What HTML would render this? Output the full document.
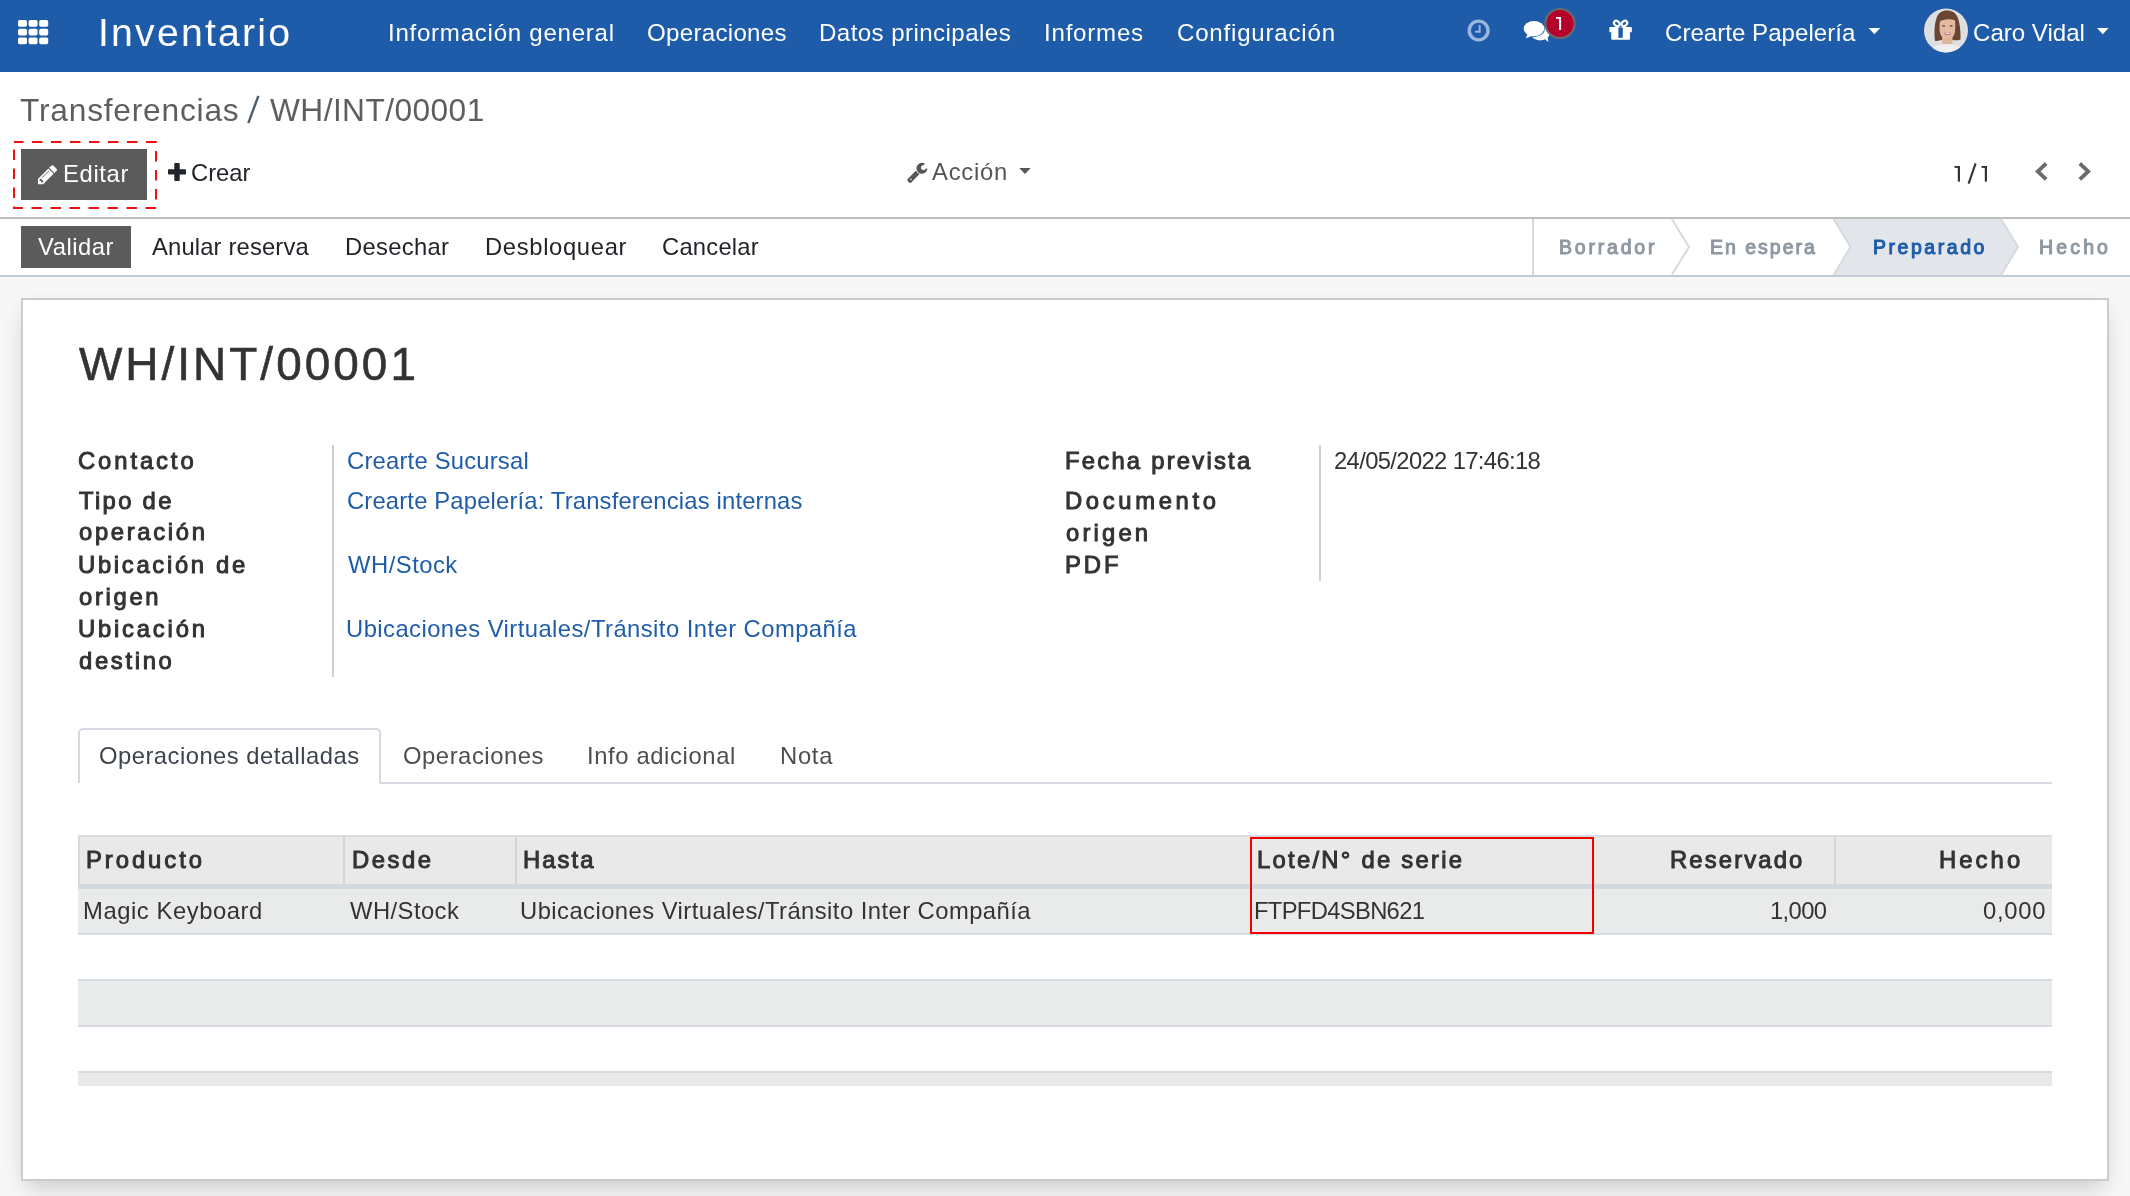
<!DOCTYPE html>
<html><head><meta charset="utf-8">
<style>
html,body{margin:0;padding:0;width:2130px;height:1196px;overflow:hidden;background:#f7f7f7;font-family:"Liberation Sans",sans-serif;}
.a{position:absolute;}
.t{position:absolute;white-space:nowrap;font-family:"Liberation Sans",sans-serif;will-change:transform;}
svg{position:absolute;overflow:visible;}
</style></head><body>
<!-- NAVBAR -->
<div class="a" style="left:0;top:0;width:2130px;height:72px;background:#1E5CAA"></div>
<svg style="left:0;top:0" width="60" height="72">
 <g fill="#fff"><rect x="18" y="20" width="9" height="6.8" rx="1.7"/><rect x="28.6" y="20" width="9" height="6.8" rx="1.7"/><rect x="39.2" y="20" width="9" height="6.8" rx="1.7"/><rect x="18" y="28.7" width="9" height="6.8" rx="1.7"/><rect x="28.6" y="28.7" width="9" height="6.8" rx="1.7"/><rect x="39.2" y="28.7" width="9" height="6.8" rx="1.7"/><rect x="18" y="37.4" width="9" height="6.8" rx="1.7"/><rect x="28.6" y="37.4" width="9" height="6.8" rx="1.7"/><rect x="39.2" y="37.4" width="9" height="6.8" rx="1.7"/></g>
</svg>
<!-- clock -->
<svg style="left:0;top:0" width="2130" height="72">
 <circle cx="1478.6" cy="30.5" r="9.4" fill="none" stroke="#9bb6dc" stroke-width="3.4"/>
 <rect x="1478.7" y="25" width="1.9" height="7.6" fill="#9bb6dc"/>
 <rect x="1475" y="30.7" width="5.6" height="1.9" fill="#9bb6dc"/>
 <!-- chat bubbles -->
 <g fill="#fff">
  <ellipse cx="1540.2" cy="33.2" rx="9.6" ry="7.2"/>
  <path d="M1548.3,41.9 L1544.2,38.6 L1547.6,36.2 Z"/>
 </g>
 <ellipse cx="1534" cy="28.6" rx="11" ry="8.3" fill="#1E5CAA"/>
 <g fill="#fff">
  <ellipse cx="1534" cy="28.6" rx="10.3" ry="7.6"/>
  <path d="M1525.8,38.2 L1527.8,33.6 L1532.6,35.8 Z"/>
 </g>
 <!-- badge -->
 <circle cx="1560" cy="23.5" r="14.6" fill="#b5002c" stroke="#6b6b6b" stroke-width="2"/>
 <!-- gift -->
 <g fill="#fff">
  <rect x="1609.4" y="27" width="22.4" height="5.3" rx="0.6"/>
  <rect x="1611.2" y="32" width="18.8" height="7.8" rx="1"/>
  <ellipse cx="1616.8" cy="23.5" rx="3.1" ry="2.3" transform="rotate(38 1616.8 23.5)" fill="none" stroke="#fff" stroke-width="2.1"/>
  <ellipse cx="1624.4" cy="23.5" rx="3.1" ry="2.3" transform="rotate(-38 1624.4 23.5)" fill="none" stroke="#fff" stroke-width="2.1"/>
 </g>
 <rect x="1618.4" y="27.4" width="4.4" height="10.4" fill="#1E5CAA"/>
 <!-- carets -->
 <path d="M1868.6,28 L1880.2,28 L1874.4,34.2 Z" fill="#fff"/>
 <path d="M2097,28 L2108.6,28 L2102.8,34.2 Z" fill="#fff"/>
 <!-- avatar -->
 <defs><clipPath id="av"><circle cx="1946" cy="30.5" r="22"/></clipPath>
 <filter id="bl" x="-10%" y="-10%" width="120%" height="120%"><feGaussianBlur stdDeviation="0.6"/></filter></defs>
 <g clip-path="url(#av)">
  <rect x="1920" y="5" width="52" height="52" fill="#dddfe2"/>
  <g filter="url(#bl)">
  <path d="M1935,41 C1934,33 1934.5,24 1936.5,18 C1938.5,12.5 1942.5,10.5 1947,10.6 C1952,10.6 1956,13 1958,18 C1960,24 1960.8,33 1960.5,39.5 C1958,40.5 1955,40.5 1953,40 L1941,40 C1939,40.8 1937,41.2 1935,41 Z" fill="#6a4532"/>
  <path d="M1939.6,22 C1939.6,18.5 1942.5,16.6 1947.4,16.6 C1952.4,16.6 1955.2,18.5 1955.2,22 L1955.2,29 C1955.2,35.5 1951.8,39.4 1947.4,39.4 C1943,39.4 1939.6,35.5 1939.6,29 Z" fill="#e4b9a3"/>
  <path d="M1938,26 C1938.5,19 1941,15.5 1947,15.2 C1952,15 1955.5,17.5 1956.2,21 C1952,18.6 1946,18.6 1940.5,21 Z" fill="#6a4532"/>
  <ellipse cx="1943.6" cy="25.9" rx="1.6" ry="0.9" fill="#7d5a50"/>
  <ellipse cx="1951.2" cy="25.9" rx="1.6" ry="0.9" fill="#7d5a50"/>
  <ellipse cx="1947.4" cy="33.6" rx="3.3" ry="1.7" fill="#c77f86"/>
  <ellipse cx="1947.4" cy="33.3" rx="2.2" ry="0.8" fill="#f4eeee"/>
  <rect x="1942" y="37.5" width="10.5" height="7" fill="#ddb59f"/>
  <path d="M1926,57 C1929,48 1936,44 1947,44 C1958,44 1965,48 1968,57 Z" fill="#eeeef0"/>
  </g>
 </g>
</svg>
<svg style="left:0;top:0" width="1600" height="60"><rect x="1559.1" y="17" width="2" height="13" fill="#fff"/><rect x="1556" y="17" width="4" height="1.8" fill="#fff"/></svg>

<!-- CONTROL PANEL -->
<div class="a" style="left:0;top:72px;width:2130px;height:205px;background:#fff"></div>
<div class="a" style="left:21px;top:149px;width:126px;height:51px;background:#5b5b5b"></div>
<svg style="left:0;top:0" width="2130" height="300">
 <rect x="14" y="142" width="142" height="66" fill="none" stroke="#ee1111" stroke-width="2" stroke-dasharray="10.5 8.5" stroke-dashoffset="1"/>
 <line x1="248.3" y1="123.2" x2="258.4" y2="95.8" stroke="#4f5b69" stroke-width="2.4"/>
 <!-- pencil -->
 <g transform="translate(38,165) scale(0.0125)" fill="#fff">
  <path d="M363 1408l91-91-235-235-91 91v107h128v128h107zm523-928q0-22-22-22-10 0-17 7l-542 542q-7 7-7 17 0 22 22 22 10 0 17-7l542-542q7-7 7-17zm-54-192l416 416-832 832h-416v-416zm683 96q0 53-37 90l-166 166-416-416 166-165q36-38 90-38 53 0 91 38l235 234q37 39 37 91z"/>
 </g>
 <!-- plus -->
 <rect x="168" y="169.2" width="18" height="5.4" rx="0.8" fill="#212529"/>
 <rect x="174.3" y="163" width="5.4" height="18" rx="0.8" fill="#212529"/>
 <!-- wrench -->
 <g transform="translate(907,161.2) scale(0.01225)" fill="#555">
  <path d="M384 1472q0-26-19-45t-45-19-45 19-19 45 19 45 45 19 45-19 19-45zm644-420l-682 682q-37 37-90 37-52 0-91-37l-106-108q-38-36-38-90 0-53 38-91l681-681q39 98 114.5 173.5t173.5 114.5zm634-435q0 39-23 106-47 134-164.5 217.5t-258.5 83.5q-185 0-316.5-131.5t-131.5-316.5 131.5-316.5 316.5-131.5q58 0 121.5 16.5t107.5 46.5q16 11 16 28t-16 28l-293 169v224l193 107q5-3 79-48.5t135.5-81 70.5-35.5q15 0 23.5 10t8.5 25z"/>
 </g>
 <path d="M1019.2,168 L1030.7,168 L1025,174 Z" fill="#555"/>
 <!-- pager 1/1 -->
 <g fill="#333">
  <rect x="1957.8" y="166" width="2.2" height="15.6"/><rect x="1954.5" y="166" width="4" height="1.9"/>
  <rect x="1984.8" y="166" width="2.2" height="15.6"/><rect x="1981.5" y="166" width="4" height="1.9"/>
 </g>
 <line x1="1968.6" y1="183.6" x2="1975.6" y2="163.4" stroke="#333" stroke-width="2.1"/>
 <!-- chevrons -->
 <polyline points="2046.2,163.5 2037.8,171.4 2046.2,179.3" fill="none" stroke="#6c6c6c" stroke-width="3.8"/>
 <polyline points="2079.8,163.5 2088.2,171.4 2079.8,179.3" fill="none" stroke="#6c6c6c" stroke-width="3.8"/>
 <!-- lines -->
 <rect x="0" y="217" width="2130" height="2" fill="#bdbdbd"/>
 <rect x="0" y="275" width="2130" height="2" fill="#c2cad3"/>
 <rect x="1532" y="219" width="2" height="56" fill="#d3d9df"/>
 <!-- status bar -->
 <polygon points="1833.6,219 2001,219 2018,247 2001,275 1833.6,275 1850.5,247" fill="#e2e6ea"/>
 <polyline points="1671.8,219 1689,247 1671.8,275" fill="none" stroke="#d5dae0" stroke-width="2"/>
 <polyline points="1833.6,219 1850.5,247 1833.6,275" fill="none" stroke="#d5dae0" stroke-width="2"/>
 <polyline points="2001,219 2018,247 2001,275" fill="none" stroke="#d5dae0" stroke-width="2"/>
</svg>
<div class="a" style="left:21px;top:226px;width:110px;height:42px;background:#5b5b5b"></div>

<!-- SHEET -->
<div class="a" style="left:21px;top:298px;width:2084px;height:879px;background:#fff;border:2px solid #cdcbcb;box-shadow:0 10px 22px -5px rgba(0,0,0,0.2)"></div>
<div class="a" style="left:332px;top:445px;width:2px;height:232px;background:#cfcfcf"></div>
<div class="a" style="left:1319px;top:445px;width:2px;height:136px;background:#cfcfcf"></div>

<!-- tabs -->
<div class="a" style="left:380px;top:782px;width:1672px;height:2px;background:#d5dae0"></div>
<div class="a" style="left:78px;top:728px;width:299px;height:53px;border:2px solid #d5dae0;border-bottom:none;border-radius:5px 5px 0 0;background:#fff"></div>

<!-- table -->
<div class="a" style="left:78px;top:835px;width:1974px;height:2px;background:#d9dde2"></div>
<div class="a" style="left:78px;top:837px;width:1974px;height:47px;background:#e9e9e9"></div>
<div class="a" style="left:78px;top:837px;width:2px;height:47px;background:#d9d9d9"></div>
<div class="a" style="left:343px;top:837px;width:2px;height:47px;background:#d4d4d4"></div>
<div class="a" style="left:515px;top:837px;width:2px;height:47px;background:#d4d4d4"></div>
<div class="a" style="left:1834px;top:837px;width:2px;height:47px;background:#d4d4d4"></div>
<div class="a" style="left:78px;top:884px;width:1974px;height:5px;background:#d3d9de"></div>
<div class="a" style="left:78px;top:889px;width:1974px;height:44px;background:#e9ebeb"></div>
<div class="a" style="left:78px;top:933px;width:1974px;height:2px;background:#d5dbe0"></div>
<div class="a" style="left:78px;top:979px;width:1974px;height:2px;background:#d5dbe0"></div>
<div class="a" style="left:78px;top:981px;width:1974px;height:44px;background:#e9ebeb"></div>
<div class="a" style="left:78px;top:1025px;width:1974px;height:2px;background:#d5dbe0"></div>
<div class="a" style="left:78px;top:1071px;width:1974px;height:2px;background:#d5dbe0"></div>
<div class="a" style="left:78px;top:1073px;width:1974px;height:13px;background:#e9e9e9"></div>
<div class="a" style="left:1250px;top:837px;width:340px;height:93px;border:2px solid #f20000"></div>

<div class="t" style="left:98.0px;top:12.8px;font-size:39.2px;line-height:39.2px;letter-spacing:2.22px;color:#ffffff">Inventario</div>
<div class="t" style="left:387.5px;top:20.5px;font-size:24.1px;line-height:24.1px;letter-spacing:0.73px;color:#ffffff">Información general</div>
<div class="t" style="left:646.7px;top:20.5px;font-size:24.1px;line-height:24.1px;letter-spacing:0.29px;color:#ffffff">Operaciones</div>
<div class="t" style="left:819.4px;top:20.5px;font-size:24.1px;line-height:24.1px;letter-spacing:0.43px;color:#ffffff">Datos principales</div>
<div class="t" style="left:1044.3px;top:20.5px;font-size:24.1px;line-height:24.1px;letter-spacing:0.77px;color:#ffffff">Informes</div>
<div class="t" style="left:1177.2px;top:20.5px;font-size:24.1px;line-height:24.1px;letter-spacing:0.78px;color:#ffffff">Configuración</div>
<div class="t" style="left:1664.8px;top:20.6px;font-size:24.1px;line-height:24.1px;letter-spacing:0.01px;color:#ffffff">Crearte Papelería</div>
<div class="t" style="left:1973.0px;top:20.6px;font-size:24.1px;line-height:24.1px;letter-spacing:-0.02px;color:#ffffff">Caro Vidal</div>
<div class="t" style="left:20.0px;top:95.1px;font-size:31.7px;line-height:31.7px;letter-spacing:0.79px;color:#5e5e5e">Transferencias</div>
<div class="t" style="left:270.0px;top:95.1px;font-size:31.7px;line-height:31.7px;letter-spacing:0.43px;color:#5e5e5e">WH/INT/00001</div>
<div class="t" style="left:63.0px;top:161.7px;font-size:23.8px;line-height:23.8px;letter-spacing:0.64px;color:#ffffff">Editar</div>
<div class="t" style="left:191.0px;top:160.5px;font-size:23.8px;line-height:23.8px;letter-spacing:0.00px;color:#212529">Crear</div>
<div class="t" style="left:932.2px;top:160.0px;font-size:23.8px;line-height:23.8px;letter-spacing:0.76px;color:#555555">Acción</div>
<div class="t" style="left:38.0px;top:235.1px;font-size:23.8px;line-height:23.8px;letter-spacing:0.53px;color:#ffffff">Validar</div>
<div class="t" style="left:152.0px;top:235.1px;font-size:23.8px;line-height:23.8px;letter-spacing:0.15px;color:#212529">Anular reserva</div>
<div class="t" style="left:345.3px;top:235.1px;font-size:23.8px;line-height:23.8px;letter-spacing:0.30px;color:#212529">Desechar</div>
<div class="t" style="left:485.4px;top:235.1px;font-size:23.8px;line-height:23.8px;letter-spacing:0.65px;color:#212529">Desbloquear</div>
<div class="t" style="left:662.4px;top:235.1px;font-size:23.8px;line-height:23.8px;letter-spacing:0.21px;color:#212529">Cancelar</div>
<div class="t" style="left:1559.0px;top:238.4px;font-size:19.5px;line-height:19.5px;letter-spacing:2.80px;-webkit-text-stroke:1.0px #8e98a3;color:#8e98a3">Borrador</div>
<div class="t" style="left:1710.0px;top:238.4px;font-size:19.5px;line-height:19.5px;letter-spacing:2.00px;-webkit-text-stroke:1.0px #8e98a3;color:#8e98a3">En espera</div>
<div class="t" style="left:1872.7px;top:238.4px;font-size:19.5px;line-height:19.5px;letter-spacing:2.54px;-webkit-text-stroke:1.0px #1E5CAA;color:#1E5CAA">Preparado</div>
<div class="t" style="left:2039.0px;top:238.4px;font-size:19.5px;line-height:19.5px;letter-spacing:3.15px;-webkit-text-stroke:1.0px #8e98a3;color:#8e98a3">Hecho</div>
<div class="t" style="left:78.7px;top:342.0px;font-size:45.9px;line-height:45.9px;letter-spacing:3.04px;-webkit-text-stroke:0.6px #333333;color:#333333">WH/INT/00001</div>
<div class="t" style="left:77.5px;top:449.1px;font-size:23.8px;line-height:23.8px;letter-spacing:2.91px;-webkit-text-stroke:1.0px #333333;color:#333333">Contacto</div>
<div class="t" style="left:78.5px;top:488.8px;font-size:23.8px;line-height:23.8px;letter-spacing:2.32px;-webkit-text-stroke:1.0px #333333;color:#333333">Tipo de</div>
<div class="t" style="left:78.5px;top:520.3px;font-size:23.8px;line-height:23.8px;letter-spacing:2.68px;-webkit-text-stroke:1.0px #333333;color:#333333">operación</div>
<div class="t" style="left:77.5px;top:552.8px;font-size:23.8px;line-height:23.8px;letter-spacing:2.70px;-webkit-text-stroke:1.0px #333333;color:#333333">Ubicación de</div>
<div class="t" style="left:78.5px;top:584.6px;font-size:23.8px;line-height:23.8px;letter-spacing:2.68px;-webkit-text-stroke:1.0px #333333;color:#333333">origen</div>
<div class="t" style="left:77.5px;top:616.7px;font-size:23.8px;line-height:23.8px;letter-spacing:2.80px;-webkit-text-stroke:1.0px #333333;color:#333333">Ubicación</div>
<div class="t" style="left:78.5px;top:648.8px;font-size:23.8px;line-height:23.8px;letter-spacing:2.68px;-webkit-text-stroke:1.0px #333333;color:#333333">destino</div>
<div class="t" style="left:1064.6px;top:449.2px;font-size:23.8px;line-height:23.8px;letter-spacing:2.24px;-webkit-text-stroke:1.0px #333333;color:#333333">Fecha prevista</div>
<div class="t" style="left:1064.6px;top:489.0px;font-size:23.8px;line-height:23.8px;letter-spacing:3.65px;-webkit-text-stroke:1.0px #333333;color:#333333">Documento</div>
<div class="t" style="left:1065.6px;top:520.6px;font-size:23.8px;line-height:23.8px;letter-spacing:3.18px;-webkit-text-stroke:1.0px #333333;color:#333333">origen</div>
<div class="t" style="left:1064.6px;top:552.9px;font-size:23.8px;line-height:23.8px;letter-spacing:2.95px;-webkit-text-stroke:1.0px #333333;color:#333333">PDF</div>
<div class="t" style="left:346.5px;top:449.4px;font-size:23.8px;line-height:23.8px;letter-spacing:0.21px;color:#1F5CA9">Crearte Sucursal</div>
<div class="t" style="left:346.5px;top:489.0px;font-size:23.8px;line-height:23.8px;letter-spacing:0.17px;color:#1F5CA9">Crearte Papelería: Transferencias internas</div>
<div class="t" style="left:347.5px;top:553.0px;font-size:23.8px;line-height:23.8px;letter-spacing:0.50px;color:#1F5CA9">WH/Stock</div>
<div class="t" style="left:345.5px;top:617.0px;font-size:23.8px;line-height:23.8px;letter-spacing:0.45px;color:#1F5CA9">Ubicaciones Virtuales/Tránsito Inter Compañía</div>
<div class="t" style="left:1333.5px;top:449.4px;font-size:23.8px;line-height:23.8px;letter-spacing:-0.64px;color:#333333">24/05/2022 17:46:18</div>
<div class="t" style="left:98.9px;top:744.3px;font-size:23.8px;line-height:23.8px;letter-spacing:0.48px;color:#3d444d">Operaciones detalladas</div>
<div class="t" style="left:402.9px;top:744.3px;font-size:23.8px;line-height:23.8px;letter-spacing:0.55px;color:#4e4e4e">Operaciones</div>
<div class="t" style="left:587.0px;top:744.3px;font-size:23.8px;line-height:23.8px;letter-spacing:0.62px;color:#4e4e4e">Info adicional</div>
<div class="t" style="left:780.4px;top:744.3px;font-size:23.8px;line-height:23.8px;letter-spacing:0.70px;color:#4e4e4e">Nota</div>
<div class="t" style="left:86.3px;top:848.3px;font-size:23.8px;line-height:23.8px;letter-spacing:2.96px;-webkit-text-stroke:1.0px #333333;color:#333333">Producto</div>
<div class="t" style="left:351.5px;top:848.3px;font-size:23.8px;line-height:23.8px;letter-spacing:2.53px;-webkit-text-stroke:1.0px #333333;color:#333333">Desde</div>
<div class="t" style="left:523.2px;top:848.3px;font-size:23.8px;line-height:23.8px;letter-spacing:2.10px;-webkit-text-stroke:1.0px #333333;color:#333333">Hasta</div>
<div class="t" style="left:1256.9px;top:848.3px;font-size:23.8px;line-height:23.8px;letter-spacing:2.27px;-webkit-text-stroke:1.0px #333333;color:#333333">Lote/N° de serie</div>
<div class="t" style="left:1670.0px;top:848.3px;font-size:23.8px;line-height:23.8px;letter-spacing:2.15px;-webkit-text-stroke:1.0px #333333;color:#333333">Reservado</div>
<div class="t" style="left:1939.2px;top:848.3px;font-size:23.8px;line-height:23.8px;letter-spacing:3.10px;-webkit-text-stroke:1.0px #333333;color:#333333">Hecho</div>
<div class="t" style="left:82.7px;top:899.2px;font-size:23.8px;line-height:23.8px;letter-spacing:0.56px;color:#333333">Magic Keyboard</div>
<div class="t" style="left:349.7px;top:899.2px;font-size:23.8px;line-height:23.8px;letter-spacing:0.44px;color:#333333">WH/Stock</div>
<div class="t" style="left:520.3px;top:899.2px;font-size:23.8px;line-height:23.8px;letter-spacing:0.45px;color:#333333">Ubicaciones Virtuales/Tránsito Inter Compañía</div>
<div class="t" style="left:1254.0px;top:899.2px;font-size:23.8px;line-height:23.8px;letter-spacing:-0.69px;color:#333333">FTPFD4SBN621</div>
<div class="t" style="left:1770.3px;top:899.2px;font-size:23.8px;line-height:23.8px;letter-spacing:-0.62px;color:#333333">1,000</div>
<div class="t" style="left:1982.9px;top:899.2px;font-size:23.8px;line-height:23.8px;letter-spacing:0.75px;color:#333333">0,000</div>
</body></html>
